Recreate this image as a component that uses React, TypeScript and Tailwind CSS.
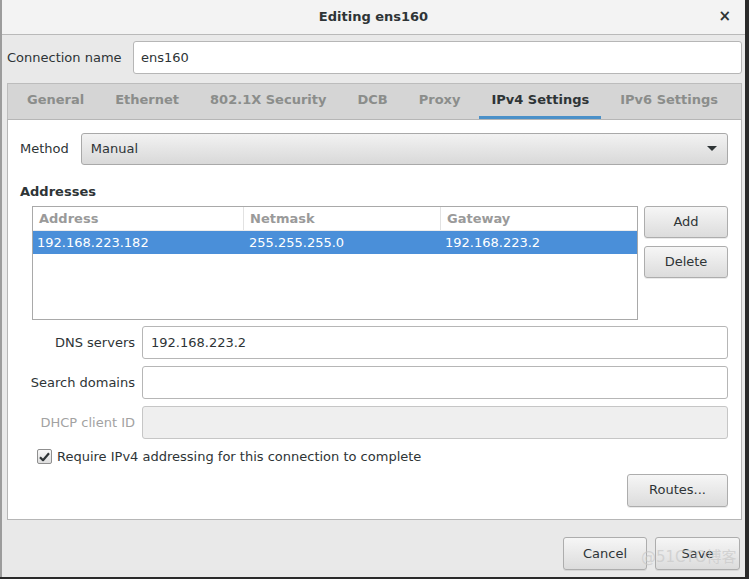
import React from 'react';

const tabs = ['General', 'Ethernet', '802.1X Security', 'DCB', 'Proxy', 'IPv4 Settings', 'IPv6 Settings'];

const btn =
  'flex items-center justify-center rounded-[3px] border border-[#adadad] bg-gradient-to-b from-[#f6f6f6] to-[#dcdcdc] text-[13px] text-[#2e3436] shadow-[0_1px_0_rgba(0,0,0,0.08)]';

const field = 'h-[33px] flex-1 rounded-[3px] border border-[#b6b6b6] flex items-center px-2 text-[13px] text-[#2e3436]';

const label = 'w-[110px] whitespace-nowrap text-right text-[13px]';

const App: React.FC = () => {
  return (
    <div
      className="w-[749px] h-[579px] bg-[#2a2a2a] overflow-hidden relative"
      style={{ fontFamily: '"DejaVu Sans", "Noto Sans", sans-serif' }}
    >
      <div className="w-[745px] h-[577px] bg-[#e9e9e9] border-l-2 border-[#9c9c9c] rounded-tr-[6px] flex flex-col">
        {/* Title bar */}
        <div className="h-[35px] shrink-0 bg-[#f3f3f3] border-b border-[#b9b9b9] flex items-center relative">
          <div className="flex-1 text-center text-[13px] font-bold text-[#2e3436]">Editing ens160</div>
          <div className="absolute right-[14px] top-[9px] text-[15px] font-bold text-[#2e3436] leading-none">×</div>
        </div>

        {/* Connection name */}
        <div className="flex items-center pl-[5px] pr-[3px] mt-[6px]">
          <span className="text-[13px] text-[#2e3436] w-[126px]">Connection name</span>
          <div className={field + ' bg-white pl-[7px]'}>ens160</div>
        </div>

        {/* Notebook */}
        <div className="mt-[9px] ml-[5px] mr-[3px] flex flex-col">
          <div className="h-[36px] bg-[#d5d5d5] border border-b-0 border-[#bcbcbc] flex items-stretch gap-[7px] pl-[7px]">
            {tabs.map((t) => {
              const active = t === 'IPv4 Settings';
              return (
                <div
                  key={t}
                  className={
                    'px-3 flex items-center text-[13px] font-bold border-b-[3px] ' +
                    (active ? 'text-[#2e3436] border-[#4a90c8]' : 'text-[#8b8d8b] border-transparent')
                  }
                >
                  {t}
                </div>
              );
            })}
          </div>

          <div className="h-[401px] bg-white border border-[#b6b6b6] flex flex-col pl-3 pr-[13px] pt-[13px]">
            {/* Method */}
            <div className="flex items-center gap-3">
              <span className="text-[13px] text-[#2e3436]">Method</span>
              <div className="h-[32px] flex-1 rounded-[3px] border border-[#a9a9a9] bg-gradient-to-b from-[#f2f2f2] to-[#d9d9d9] flex items-center justify-between pl-[9px] pr-[10px] text-[13px] text-[#2e3436]">
                <span>Manual</span>
                <svg width="10" height="6" viewBox="0 0 10 6">
                  <path d="M0 0 L10 0 L5 5 Z" fill="#2e3436" />
                </svg>
              </div>
            </div>

            <div className="mt-[19px] text-[13px] font-bold text-[#2e3436] leading-[16px]">Addresses</div>

            {/* Table + buttons */}
            <div className="mt-[6px] flex gap-[6px] pl-[12px]">
              <div className="w-[606px] h-[114px] border border-[#a9a9a9] bg-white flex flex-col">
                <div className="h-[24px] flex text-[13px] font-bold text-[#9a9a9a] border-b border-[#ececec]">
                  <div className="w-[211px] pl-[6px] flex items-center border-r border-[#e2e2e2]">Address</div>
                  <div className="w-[197px] pl-[6px] flex items-center border-r border-[#e2e2e2]">Netmask</div>
                  <div className="flex-1 pl-[6px] flex items-center">Gateway</div>
                </div>
                <div className="h-[23px] flex text-[13px] text-white bg-[#4a8fd9]">
                  <div className="w-[211px] pl-[4px] flex items-center">192.168.223.182</div>
                  <div className="w-[197px] pl-[5px] flex items-center">255.255.255.0</div>
                  <div className="flex-1 pl-[4px] flex items-center">192.168.223.2</div>
                </div>
              </div>
              <div className="flex flex-col gap-2">
                <div className={btn + ' w-[84px] h-[32px]'}>Add</div>
                <div className={btn + ' w-[84px] h-[32px]'}>Delete</div>
              </div>
            </div>

            {/* Fields */}
            <div className="mt-[6px] flex flex-col gap-[7px] pl-[5px]">
              <div className="flex items-center gap-[7px]">
                <span className={label + ' text-[#2e3436]'}>DNS servers</span>
                <div className={field + ' bg-white'}>192.168.223.2</div>
              </div>
              <div className="flex items-center gap-[7px]">
                <span className={label + ' text-[#2e3436]'}>Search domains</span>
                <div className={field + ' bg-white'}></div>
              </div>
              <div className="flex items-center gap-[7px]">
                <span className={label + ' text-[#a2a2a2]'}>DHCP client ID</span>
                <div className={field + ' bg-[#efefef] border-[#c6c6c6]'}></div>
              </div>
            </div>

            {/* Checkbox */}
            <div className="mt-[8px] ml-[17px] flex items-center gap-[5px]">
              <div className="w-[15px] h-[15px] rounded-[2px] border border-[#8f8f8f] bg-gradient-to-b from-[#f8f8f8] to-[#dedede] flex items-center justify-center">
                <svg width="11" height="10" viewBox="0 0 11 10">
                  <path d="M1 5.2 L4 8.2 L10 1.2" stroke="#2e3436" strokeWidth="2.2" fill="none" strokeLinejoin="round" />
                </svg>
              </div>
              <span className="text-[13px] text-[#2e3436]">Require IPv4 addressing for this connection to complete</span>
            </div>

            <div className="mt-[7px] flex justify-end">
              <div className={btn + ' w-[101px] h-[33px]'}>Routes...</div>
            </div>
          </div>
        </div>

        {/* Bottom buttons */}
        <div className="mt-[17px] flex justify-end gap-2 pr-[5px]">
          <div className={btn + ' w-[84px] h-[33px]'}>Cancel</div>
          <div className={btn + ' w-[85px] h-[33px]'}>Save</div>
        </div>
      </div>

      {/* watermark */}
      <div
        className="absolute left-[641px] top-[546px] text-[15px] text-[#c8c8c8]/70 pointer-events-none"
        style={{ fontFamily: '"DejaVu Sans", "Noto Sans CJK SC", sans-serif' }}
      >
        @51CTO博客
      </div>
    </div>
  );
};

export default App;
